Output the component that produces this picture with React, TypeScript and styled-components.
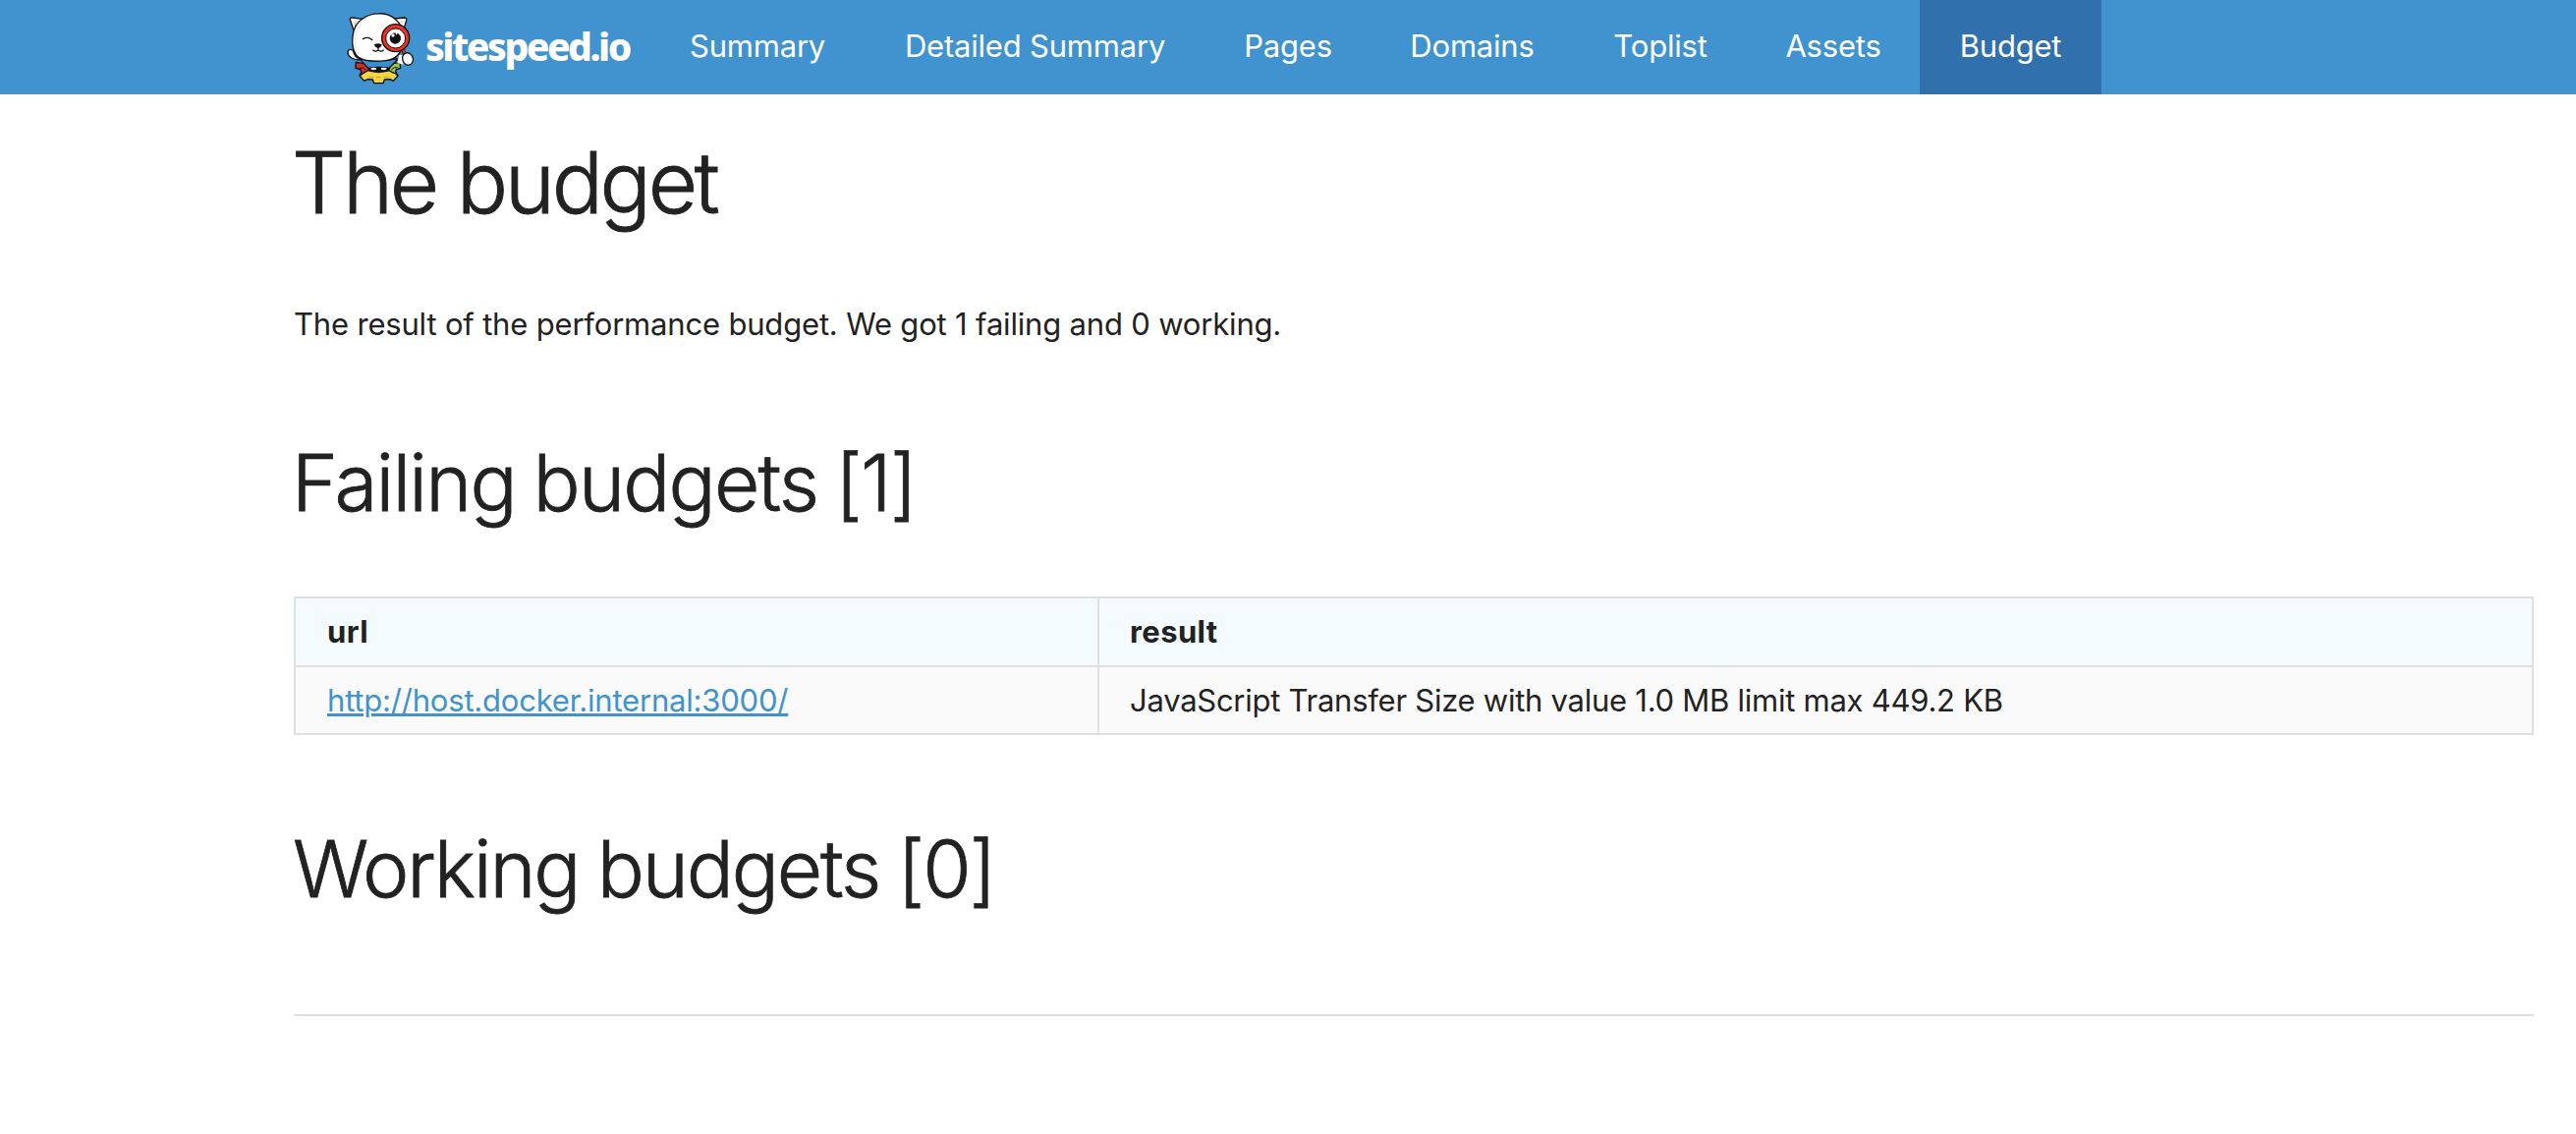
import React from "react";
import styled, { createGlobalStyle } from "styled-components";

const GlobalStyle = createGlobalStyle`
  * { box-sizing: border-box; }
  html, body { margin: 0; padding: 0; background: #fff; }
  body {
    font-family: Inter, "Liberation Sans", sans-serif;
    font-size: 31px;
    line-height: 52px;
    color: #222;
  }
`;

const NavBar = styled.header`
  display: flex;
  height: 96px;
  padding-left: 352px;
  background: #4093ce;
`;

const Brand = styled.a`
  display: flex;
  width: 310px;
  padding-top: 11px;
`;

const Wordmark = styled.span`
  margin-left: 11px;
  font-family: "Noto Sans", "Open Sans", sans-serif;
  font-size: 39px;
  line-height: 72px;
  font-weight: 800;
  letter-spacing: -2.5px;
  white-space: nowrap;
  color: #fff;
`;

const NavItem = styled.a<{ $width: number; $active?: boolean }>`
  display: flex;
  justify-content: center;
  width: ${(p) => p.$width}px;
  height: 96px;
  line-height: 94px;
  letter-spacing: -0.2px;
  white-space: nowrap;
  color: #fff;
  background: ${(p) => (p.$active ? "#2f70ad" : "transparent")};
`;

const Main = styled.main`
  display: flex;
  flex-direction: column;
  width: 2280px;
  margin-left: 299px;
`;

const Title = styled.h1`
  margin: 0 0 0 -2px;
  padding-top: 37px;
  font-size: 87px;
  line-height: 106px;
  font-weight: 300;
  letter-spacing: -3.4px;
  -webkit-text-stroke: 0.9px #222;
`;

const Heading = styled.h2<{ $top: number; $left: number; $spacing: number; $gap: number }>`
  margin: ${(p) => p.$top}px 0 0 ${(p) => p.$left}px;
  font-size: 80px;
  line-height: 100px;
  font-weight: 300;
  letter-spacing: ${(p) => p.$spacing}px;
  word-spacing: ${(p) => p.$gap}px;
  -webkit-text-stroke: 0.8px #222;
`;

const Intro = styled.p`
  margin: 65px 0 0;
  letter-spacing: -0.18px;
`;

const Table = styled.div`
  display: grid;
  grid-template-columns: 818px 1fr;
  margin-top: 66px;
  border: 2px solid #e0e0e0;
`;

const Cell = styled.div<{ $head?: boolean; $first?: boolean }>`
  height: ${(p) => (p.$head ? 70 : 67)}px;
  padding-left: ${(p) => (p.$first ? 32 : 31)}px;
  line-height: 68px;
  letter-spacing: ${(p) => (p.$head ? 0.4 : p.$first ? -0.2 : -0.26)}px;
  font-weight: ${(p) => (p.$head ? 700 : 400)};
  background: ${(p) => (p.$head ? "#f3fbff" : "#fafafa")};
  border-bottom: ${(p) => (p.$head ? "2px solid #e0e0e0" : "none")};
  border-right: ${(p) => (p.$first ? "2px solid #e0e0e0" : "none")};
`;

const Link = styled.a`
  color: #4093ce;
  text-decoration: underline;
  text-decoration-thickness: 3px;
`;

const Rule = styled.hr`
  width: 100%;
  margin: 98px 0 0;
  border: 0;
  border-top: 2px solid #e0e0e0;
`;

const Mascot = () => (
  <svg width="70" height="78" viewBox="36 33 210 234">
    <g stroke="#111" strokeWidth="4" strokeLinejoin="round" strokeLinecap="round">
      <path d="M67 190 L103 196 L110 222 L96 230 L90 240 L78 230 L84 219 L80 212 L66 208Z" fill="#dc2b25" />
      <path d="M201 190 L168 196 L162 222 L176 230 L182 240 L194 230 L188 219 L190 212 L203 208Z" fill="#9bc44b" />
      <path d="M106 214 L136 221 L166 214 L180 222 L188 224 L195 231 L181 247 L171 242 L154 243 L150 254 L122 254 L118 243 L103 242 L92 247 L79 232 L88 224Z" fill="#f3d443" />
      <path d="M106 236 H120 M130 236 H142 M152 236 H168" fill="none" stroke="#a8902c" strokeWidth="2" />
      <path d="M79 208 Q88 202 95 212 M176 212 Q184 202 193 206" fill="none" strokeWidth="3" />
      <path d="M79 178 C68 180 64 172 60 160 C58 148 42 148 42 160 C42 174 58 182 76 183Z" fill="#fff" />
      <path d="M77 178 L104 208 Q136 214 168 208 L198 178 Q136 190 77 178Z" fill="#388fcf" />
      <path d="M105 208 Q136 202 170 208 L165 216 Q136 221 108 216Z" fill="#111" />
      <ellipse cx="121" cy="210" rx="9" ry="3.5" fill="#fff" stroke="none" />
      <ellipse cx="152" cy="210" rx="9" ry="3.5" fill="#fff" stroke="none" />
      <path d="M62 98 L49 60 Q48 53 56 54 L88 58 M184 57 L214 54 Q223 54 221 62 L212 92" fill="#fff" />
      <path d="M65 86 L58 65 L75 64Z M202 63 L212 63 L208 76Z" fill="#ddd" stroke="none" />
      <path d="M88 57 C112 37 162 35 186 58 C205 72 213 96 211 124 C209 158 194 181 158 185 C132 188 96 188 75 175 C57 163 54 130 57 110 C60 86 68 68 88 57Z" fill="#fff" />
      <path d="M81 76 C62 100 58 137 73 164" fill="none" stroke="#e8e8e8" strokeWidth="4" />
      <path d="M193 175 Q204 164 213 166 L229 198 Q207 201 196 191Z" fill="#388fcf" stroke="none" />
      <path d="M199 168 L193 191 L211 197 L212 168Z" fill="#fff" stroke="none" />
      <path d="M212 151 L213 163" stroke="#111" strokeWidth="10" />
      <path d="M211 148 L214 163" stroke="#ed3026" strokeWidth="6" />
      <ellipse cx="225" cy="180" rx="16" ry="19" transform="rotate(-19 225 180)" fill="#fff" />
      <circle cx="188" cy="116" r="42" fill="#ed3026" />
      <circle cx="188" cy="117" r="30" fill="#fff" strokeWidth="3" />
      <circle cx="187" cy="117" r="17" fill="#111" stroke="none" />
      <circle cx="180" cy="108" r="5" fill="#fff" stroke="none" />
      <path d="M187 99 L195 99 L190 107Z" fill="#fff" stroke="none" />
      <path d="M88 119 Q103 110 117 122" fill="none" />
      <path d="M125 137 Q134 133 144 137 Q142 144 135 145 Q128 144 125 137Z" fill="#111" />
      <path d="M135 146 L135 152 M119 153 Q127 160 135 153 Q144 160 151 153" fill="none" strokeWidth="3.5" />
    </g>
  </svg>
);

const navigation = [
  { label: "Summary", width: 218 },
  { label: "Detailed Summary", width: 347 },
  { label: "Pages", width: 168 },
  { label: "Domains", width: 207 },
  { label: "Toplist", width: 176 },
  { label: "Assets", width: 176 },
  { label: "Budget", width: 185, active: true },
];

export default function App() {
  return (
    <>
      <GlobalStyle />
      <NavBar>
        <Brand>
          <Mascot />
          <Wordmark>sitespeed.io</Wordmark>
        </Brand>
        {navigation.map((item) => (
          <NavItem key={item.label} $width={item.width} $active={item.active}>{item.label}</NavItem>
        ))}
      </NavBar>
      <Main>
        <Title>The budget</Title>
        <Intro>The result of the performance budget. We got 1 failing and 0 working.</Intro>
        <Heading $top={85} $left={-2} $spacing={-1.8} $gap={-3}>Failing budgets [1]</Heading>
        <Table>
          <Cell $head $first>url</Cell>
          <Cell $head>result</Cell>
          <Cell $first><Link>http://host.docker.internal:3000/</Link></Cell>
          <Cell>JavaScript Transfer Size with value 1.0 MB limit max 449.2 KB</Cell>
        </Table>
        <Heading $top={86} $left={-1} $spacing={-2.15} $gap={-2}>Working budgets [0]</Heading>
        <Rule />
      </Main>
    </>
  );
}
